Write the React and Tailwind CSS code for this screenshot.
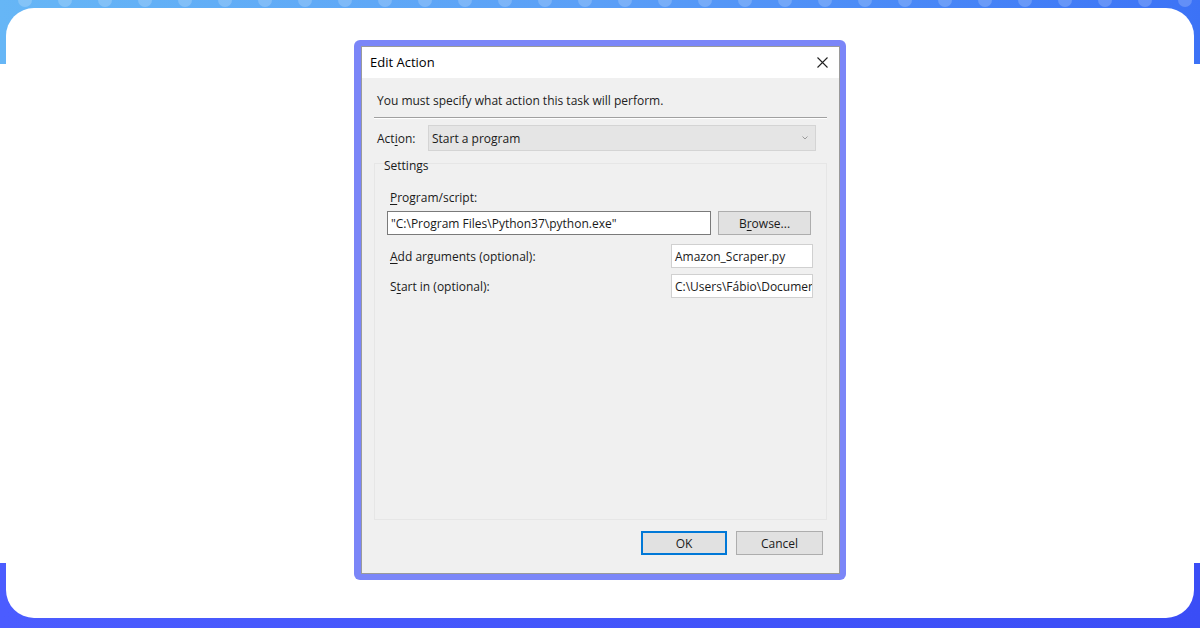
import React from 'react';

const font = { fontFamily: '"Open Sans", "Noto Sans", sans-serif' };

const Key = ({ children }) => <span className="underline underline-offset-2">{children}</span>;

const TopBand = () => (
  <div className="h-[64px] bg-gradient-to-r from-[#66b6f6] via-[#5b9ff7] to-[#3c72f6] flex items-start gap-[26px] pl-[18px] overflow-hidden">
    {Array.from({ length: 46 }).map((_, i) => (
      <div key={i} className="w-[14px] h-[14px] -mt-[7px] rounded-full bg-white/20 shrink-0" />
    ))}
  </div>
);

export default function App() {
  return (
    <div className="relative w-[1200px] h-[628px] overflow-hidden bg-white" style={font}>
      {/* background bands */}
      <div className="flex flex-col h-full">
        <TopBand />
        <div className="flex-1 bg-white" />
        <div className="h-[65px] bg-gradient-to-r from-[#4b5cff] to-[#3a4df6]" />
      </div>

      {/* white card */}
      <div className="absolute left-[6px] right-[6px] top-[8px] bottom-[10px] bg-white rounded-[28px] flex justify-center pt-[32px]">
        {/* dialog frame */}
        <div className="w-[492px] h-[540px] bg-[#7b86f8] rounded-[6px] p-[6px] pl-[7px]">
          <div className="w-full h-full border border-[#9a9a9a] bg-[#f0f0f0] flex flex-col text-[12px] text-[#1a1a1a]">
            {/* title bar */}
            <div className="h-[31px] bg-white flex items-center justify-between pl-[8px] pr-[11px] shrink-0">
              <span className="text-[13px] text-black">Edit Action</span>
              <svg width="11" height="11" viewBox="0 0 11 11" className="text-[#222]">
                <path d="M0.5 0.5L10.5 10.5M10.5 0.5L0.5 10.5" stroke="currentColor" strokeWidth="1.1" />
              </svg>
            </div>

            {/* body */}
            <div className="flex-1 flex flex-col px-[12px] pt-[14px]">
              <div className="pl-[3px] text-[#222]">You must specify what action this task will perform.</div>
              <div className="mt-[7px] h-[2px] border-t border-[#a0a0a0] border-b border-b-white" />

              <div className="mt-[6px] flex items-center pl-[3px]">
                <span className="w-[51px] pt-[2px]">Act<Key>i</Key>on:</span>
                <div className="w-[388px] h-[26px] bg-[#e5e5e5] border border-[#d4d4d4] flex items-center justify-between pl-[3px] pr-[7px]">
                  <span className="pt-[1px]">Start a program</span>
                  <svg width="6" height="4" viewBox="0 0 6 4">
                    <path d="M0.5 0.5L3 3L5.5 0.5" fill="none" stroke="#9a9a9a" strokeWidth="1" />
                  </svg>
                </div>
              </div>

              {/* settings group */}
              <div className="mt-[12px] h-[357px] border border-[#e6e6e6] bg-[#f0f0f0] flex flex-col">
                <div className="-mt-[7px] pl-[9px]">Settings</div>

                <div className="mt-[14px] pl-[15px]"><Key>P</Key>rogram/script:</div>
                <div className="mt-[4px] pl-[12px] flex items-center">
                  <div className="w-[324px] h-[24px] bg-white border border-[#7a7a7a] flex items-center pl-[3px] pt-[1px]">
                    "C:\Program Files\Python37\python.exe"
                  </div>
                  <button type="button" className="ml-[7px] w-[93px] h-[24px] bg-[#e1e1e1] border border-[#adadad] flex items-center justify-center pt-[1px]" style={font}>
                    B<Key>r</Key>owse...
                  </button>
                </div>

                <div className="mt-[9px] pl-[15px] pr-[13px] flex items-center justify-between">
                  <span className="pt-[2px]"><Key>A</Key>dd arguments (optional):</span>
                  <div className="w-[142px] h-[24px] bg-white border border-[#d0d0d0] flex items-center pl-[3px] pt-[1px]">
                    Amazon_Scraper.py
                  </div>
                </div>

                <div className="mt-[6px] pl-[15px] pr-[13px] flex items-center justify-between">
                  <span className="pt-[2px]">S<Key>t</Key>art in (optional):</span>
                  <div className="w-[142px] h-[24px] bg-white border border-[#d0d0d0] flex items-center pl-[3px] pt-[1px] overflow-hidden whitespace-nowrap">
                    C:\Users\Fábio\Documen
                  </div>
                </div>
              </div>

              <div className="mt-[11px] flex justify-end gap-[9px] pr-[4px]">
                <button type="button" className="w-[86px] h-[24px] bg-[#e1e1e1] border-2 border-[#0078d7] flex items-center justify-center pt-[1px]" style={font}>
                  OK
                </button>
                <button type="button" className="w-[87px] h-[24px] bg-[#e1e1e1] border border-[#adadad] flex items-center justify-center pt-[1px]" style={font}>
                  Cancel
                </button>
              </div>
            </div>
          </div>
        </div>
      </div>
    </div>
  );
}
